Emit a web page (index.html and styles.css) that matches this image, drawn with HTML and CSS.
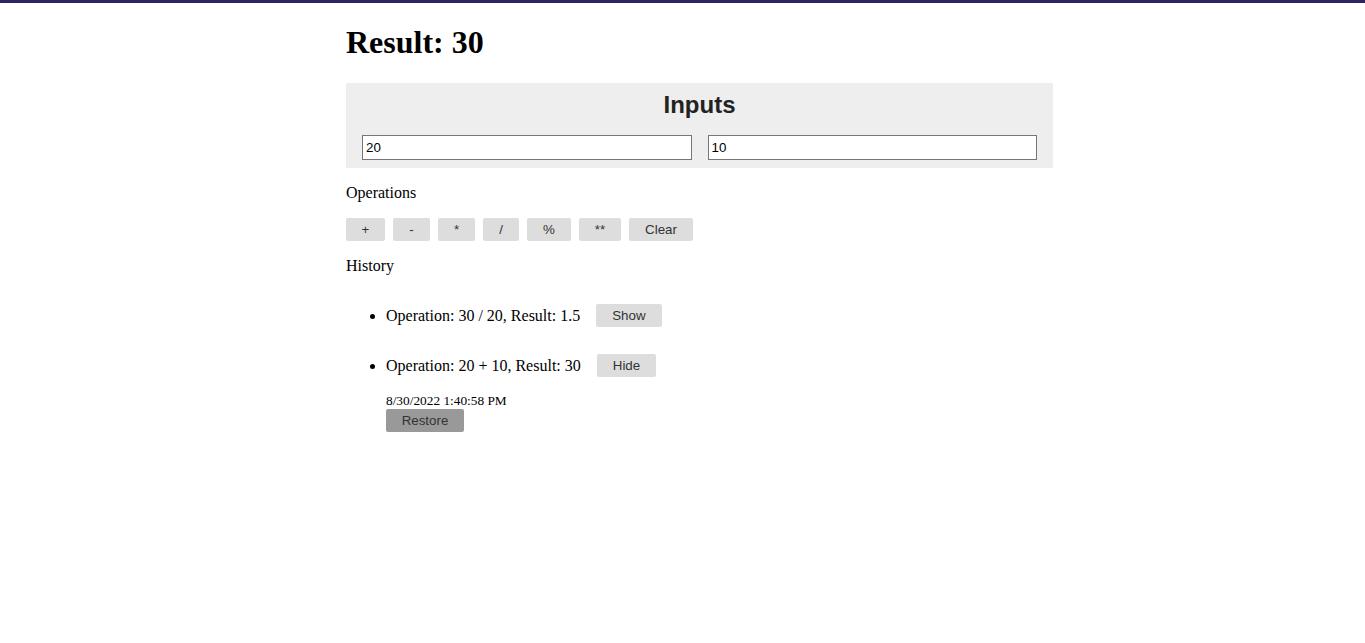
FILE: index.html
```html
<!DOCTYPE html>
<html>
<head>
<meta charset="utf-8">
<link rel="stylesheet" href="styles.css">
</head>
<body>
<main class="app">
  <h1 class="result">Result: 30</h1>
  <section class="inputs">
    <h2 class="inputs-title">Inputs</h2>
    <div class="inputs-row">
      <input class="field" type="text" value="20">
      <input class="field" type="text" value="10">
    </div>
  </section>
  <p class="label">Operations</p>
  <div class="ops">
    <button class="btn op-plus">+</button>
    <button class="btn op-minus">-</button>
    <button class="btn op-mul">*</button>
    <button class="btn op-div">/</button>
    <button class="btn op-mod">%</button>
    <button class="btn op-pow">**</button>
    <button class="btn op-clear">Clear</button>
  </div>
  <p class="label">History</p>
  <ul class="history">
    <li class="entry">
      <div class="entry-row"><span>Operation: 30 / 20, Result: 1.5</span><button class="btn toggle">Show</button></div>
    </li>
    <li class="entry">
      <div class="entry-row"><span>Operation: 20 + 10, Result: 30</span><button class="btn toggle">Hide</button></div>
      <div class="details">
        <div class="date">8/30/2022 1:40:58 PM</div>
        <button class="btn restore">Restore</button>
      </div>
    </li>
  </ul>
</main>
</body>
</html>
```
FILE: styles.css
```css
html, body {
  margin: 0;
  padding: 0;
  background: #fff;
}
body {
  border-top: 3px solid #2f2462;
  font-family: "Liberation Serif", "Times New Roman", serif;
  font-size: 16px;
  color: #000;
}
.app {
  width: 707px;
  margin-left: calc(50% - 336.5px);
  padding-bottom: 40px;
}
.result {
  font-size: 32px;
  font-weight: bold;
  margin: 21px 0 22px;
  line-height: 37px;
}
.inputs {
  background: #eeeeee;
  padding: 8px 16px 8px;
  margin: 0;
}
.inputs-title {
  font-family: "Liberation Sans", Arial, sans-serif;
  font-size: 24px;
  font-weight: bold;
  color: #222;
  text-align: center;
  margin: 0 0 16px;
  line-height: 28px;
}
.inputs-row {
  display: flex;
  gap: 16px;
}
.field {
  flex: 1;
  min-width: 0;
  height: 25px;
  box-sizing: border-box;
  border: 1px solid #767676;
  padding: 1px 3px;
  font-family: "Liberation Sans", Arial, sans-serif;
  font-size: 13.33px;
  color: #000;
  background: #fff;
  margin: 0;
}
.label {
  margin: 16px 0;
  line-height: 18px;
}
.ops {
  display: flex;
  gap: 8px;
  margin-top: 16px;
}
.btn {
  font-family: "Liberation Sans", Arial, sans-serif;
  font-size: 13.33px;
  line-height: 15px;
  height: 23px;
  padding: 4px 16px;
  border: none;
  border-radius: 2px;
  background: #dddddd;
  color: #333;
  cursor: pointer;
  margin: 0;
}
.op-plus { width: 39px; padding: 0; }
.op-minus { width: 37px; padding: 0; }
.op-mul { width: 37px; padding: 0; }
.op-div { width: 36px; padding: 0; }
.op-mod { width: 44px; padding: 0; }
.op-pow { width: 42px; padding: 0; }
.op-clear { width: 64px; padding: 0; }
.history {
  margin: 29px 0 0;
  padding-left: 40px;
}
.entry + .entry {
  margin-top: 27px;
}
.entry-row {
  display: inline-flex;
  align-items: center;
  gap: 16px;
  height: 23px;
  vertical-align: baseline;
}
.toggle {
  padding: 4px 16px;
}
.details {
  margin-top: 16px;
}
.date {
  font-size: 13.33px;
  line-height: 16px;
}
.restore {
  background: #999999;
  color: #333;
  width: 78px;
  padding: 0;
}
```
